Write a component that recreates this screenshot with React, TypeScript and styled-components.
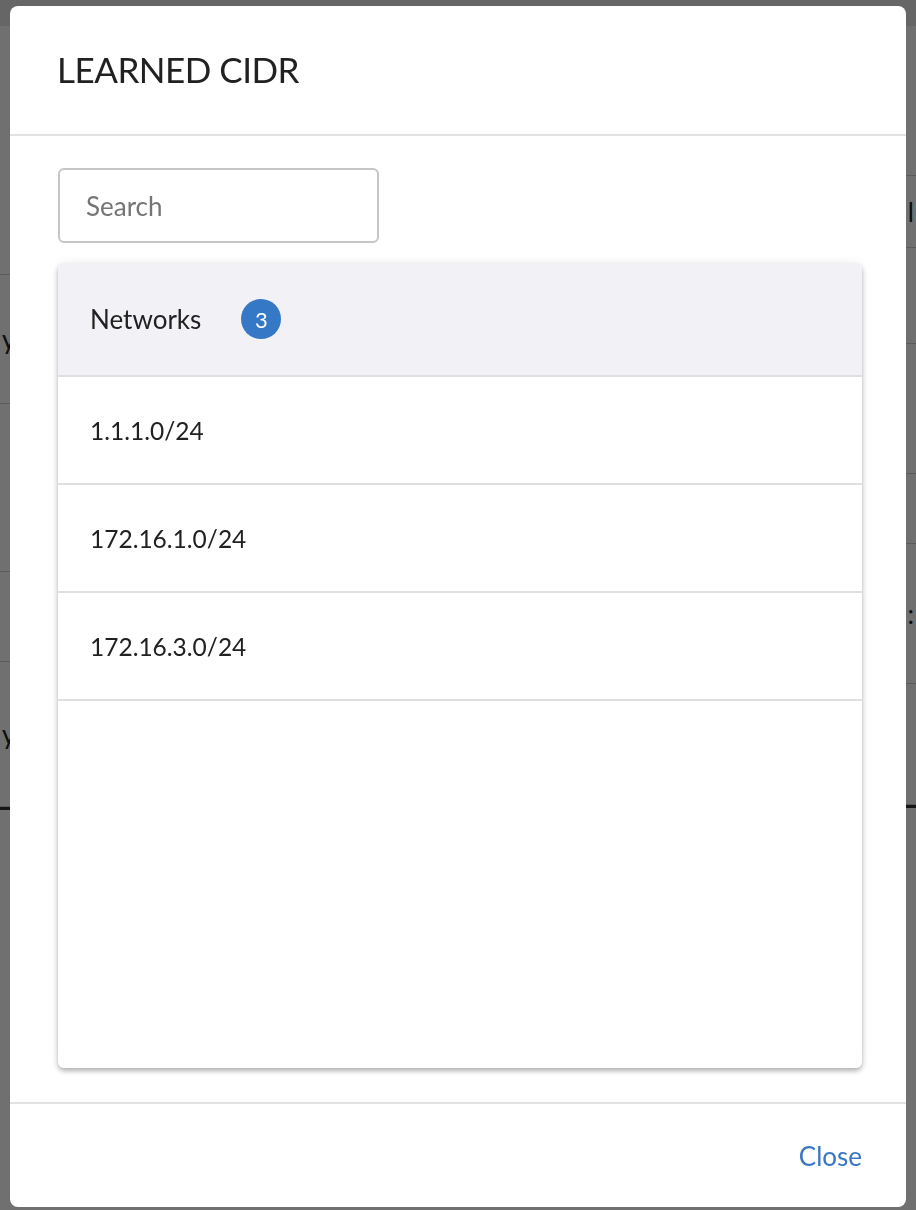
import React from "react";
import styled, { createGlobalStyle } from "styled-components";

const GlobalStyle = createGlobalStyle`
  html, body { margin: 0; padding: 0; }
  body { font-family: Lato, "Liberation Sans", sans-serif; background: #ffffff; }
  * { box-sizing: border-box; }
`;

/* ---------- background page (dimmed behind the modal) ---------- */
const Page = styled.div`
  width: 916px;
  height: 1210px;
  display: flex;
  flex-direction: column;
  background: #ffffff;
  overflow: hidden;
`;

const TopBar = styled.div`
  height: 26px;
  background: #e9e9e9;
  flex: none;
`;

const Columns = styled.div`
  display: grid;
  grid-template-columns: 1fr 1fr;
  align-items: start;
  flex: none;
`;

const BgColumn = styled.div`
  display: flex;
  flex-direction: column;
  border-bottom: 3px solid #333;
`;

const BgRow = styled.div<{ $h: number; $align: "left" | "right" }>`
  height: ${(p) => p.$h}px;
  border-bottom: 1px solid #cfcfcf;
  display: flex;
  align-items: center;
  justify-content: ${(p) => (p.$align === "left" ? "flex-start" : "flex-end")};
  padding: 0 2px;
  font-size: 26px;
  color: #222;
`;

/* ---------- modal ---------- */
const Overlay = styled.div`
  position: fixed;
  inset: 0;
  background: rgba(0, 0, 0, 0.56);
  display: flex;
  padding: 6px 10px 3px 10px;
`;

const Dialog = styled.div`
  width: 896px;
  height: 1201px;
  background: #ffffff;
  border-radius: 8px;
  display: flex;
  flex-direction: column;
  overflow: hidden;
`;

const Header = styled.div`
  height: 130px;
  flex: none;
  display: flex;
  align-items: center;
  padding: 0 47px 2px;
  border-bottom: 2px solid #e2e2e2;
`;

const Title = styled.h2`
  margin: 0;
  font-family: Lato, "Liberation Sans", sans-serif;
  font-weight: 400;
  font-size: 35px;
  color: #212121;
  letter-spacing: -0.5px;
`;

const Body = styled.div`
  flex: 1;
  display: flex;
  flex-direction: column;
  gap: 20px;
  padding: 32px 44px 34px 48px;
  min-height: 0;
`;

const SearchInput = styled.input`
  width: 321px;
  height: 75px;
  flex: none;
  border: 2px solid #c6c6c6;
  border-radius: 6px;
  padding: 0 26px;
  font-family: Lato, "Liberation Sans", sans-serif;
  font-size: 26px;
  color: #212121;
  outline: none;
  &::placeholder { color: #757575; }
`;

const Card = styled.div`
  flex: 1;
  border-radius: 6px;
  background: #ffffff;
  box-shadow: 0 3px 5px rgba(0, 0, 0, 0.28), 0 0 12px rgba(0, 0, 0, 0.06);
  overflow: hidden;
  display: flex;
  flex-direction: column;
`;

const CardHeader = styled.div`
  height: 114px;
  flex: none;
  background: #f2f2f6;
  border-bottom: 2px solid #e0e0e0;
  display: flex;
  align-items: center;
  gap: 40px;
  padding: 0 32px;
  font-size: 26px;
  color: #212121;
`;

const Badge = styled.span`
  width: 40px;
  height: 40px;
  border-radius: 50%;
  background: #3578c6;
  color: #ffffff;
  font-size: 22px;
  display: inline-flex;
  align-items: center;
  justify-content: center;
`;

const Row = styled.div`
  height: 108px;
  flex: none;
  border-bottom: 2px solid #e0e0e0;
  display: flex;
  align-items: center;
  padding: 0 32px;
  font-size: 24.5px;
  color: #212121;
`;

const Footer = styled.div`
  height: 105px;
  flex: none;
  border-top: 2px solid #e2e2e2;
  display: flex;
  align-items: center;
  justify-content: flex-end;
  padding: 0 44px 0 48px;
`;

const CloseButton = styled.button`
  background: none;
  border: none;
  padding: 0;
  font-family: Lato, "Liberation Sans", sans-serif;
  font-size: 26px;
  color: #3a77c2;
  cursor: pointer;
`;

const leftRows = [249, 129, 168, 90, 145];
const rightRows = [150, 72, 96, 130, 70, 140, 121];

const networks = ["1.1.1.0/24", "172.16.1.0/24", "172.16.3.0/24"];

export default function App() {
  return (
    <>
      <GlobalStyle />
      <Page>
        <TopBar />
        <Columns>
          <BgColumn>
            {leftRows.map((h, i) => (
              <BgRow key={i} $h={h} $align="left">
                {i === 1 || i === 4 ? "y" : ""}
              </BgRow>
            ))}
          </BgColumn>
          <BgColumn>
            {rightRows.map((h, i) => (
              <BgRow key={i} $h={h} $align="right">
                {i === 1 ? "l" : i === 5 ? ":" : ""}
              </BgRow>
            ))}
          </BgColumn>
        </Columns>
      </Page>
      <Overlay>
        <Dialog role="dialog" aria-label="Learned CIDR">
          <Header>
            <Title>LEARNED CIDR</Title>
          </Header>
          <Body>
            <SearchInput placeholder="Search" />
            <Card>
              <CardHeader>
                <span>Networks</span>
                <Badge>{networks.length}</Badge>
              </CardHeader>
              {networks.map((n) => (
                <Row key={n}>{n}</Row>
              ))}
            </Card>
          </Body>
          <Footer>
            <CloseButton>Close</CloseButton>
          </Footer>
        </Dialog>
      </Overlay>
    </>
  );
}
